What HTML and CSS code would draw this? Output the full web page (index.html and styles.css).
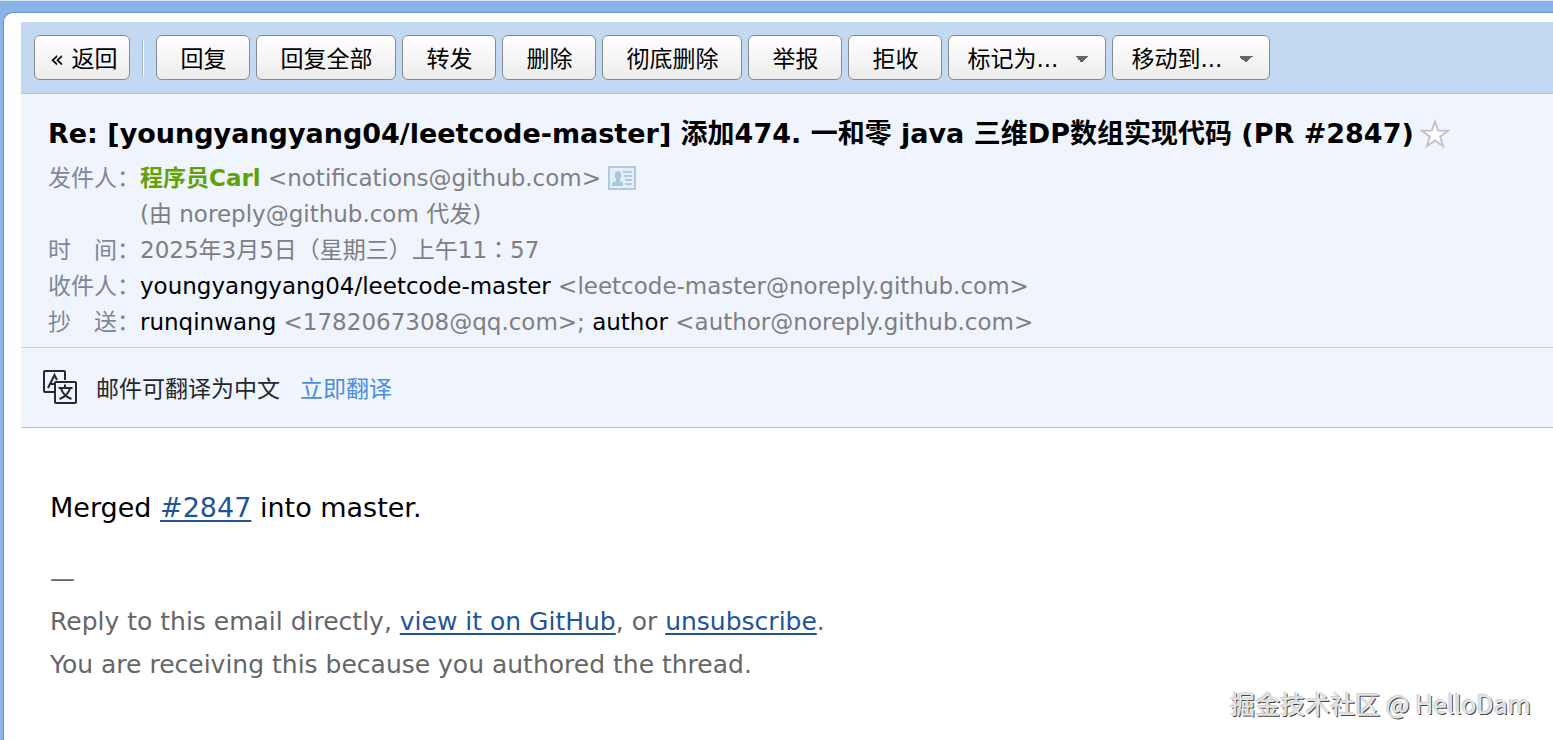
FILE: index.html
```html
<!DOCTYPE html>
<html lang="zh-CN">
<head>
<meta charset="utf-8">
<meta name="viewport" content="width=device-width, initial-scale=1">
<title>Re: [youngyangyang04/leetcode-master]</title>
<link rel="stylesheet" href="styles.css">
</head>
<body>
<main class="panel">
  <nav class="toolbar">
    <button class="btn btn-back" type="button">« 返回</button>
    <span class="divider"></span>
    <button class="btn" type="button">回复</button>
    <button class="btn" type="button">回复全部</button>
    <button class="btn" type="button">转发</button>
    <button class="btn" type="button">删除</button>
    <button class="btn" type="button">彻底删除</button>
    <button class="btn" type="button">举报</button>
    <button class="btn" type="button">拒收</button>
    <select class="btn btn-menu" aria-label="标记为"><option>标记为...</option></select>
    <select class="btn btn-menu" aria-label="移动到"><option>移动到...</option></select>
  </nav>

  <header class="mail-head">
    <h1 class="subject">
      <span>Re: [youngyangyang04/leetcode-master] 添加474. 一和零 java 三维DP数组实现代码 (PR #2847)</span>
      <svg class="star" viewBox="0 0 30 30" aria-hidden="true"><path d="M15 2.500 18.200 11.500 28 11.700 20.200 17.600 23 27 15 21.500 7 27 9.800 17.600 2 11.700 11.800 11.500Z" fill="#fff" stroke="#c3c4c6" stroke-width="2"/></svg>
    </h1>
    <dl class="meta">
      <dt>发件人：</dt>
      <dd><b class="sender">程序员Carl</b> &lt;notifications@github.com&gt;
        <svg class="card" viewBox="0 0 28 24" aria-hidden="true"><rect x="1" y="1" width="26" height="22" fill="#e3eff9" stroke="#b3cadc" stroke-width="2"/><path d="M4 20v-3l4-2v-2c-2-2-2-8 2-8s4 6 2 8v2l3 2v3Z" fill="#a9c8e0"/><path d="M15 6h9M16 10h8M17 14h7M17 18h7" stroke="#b3cadc" stroke-width="2"/></svg>
        <br>(由 noreply@github.com 代发)</dd>
      <dt>时　间：</dt>
      <dd>2025年3月5日（星期三）上午<time class="clock" lang="zh-TW">11：57</time></dd>
      <dt>收件人：</dt>
      <dd><span class="name">youngyangyang04/leetcode-master</span> &lt;leetcode-master@noreply.github.com&gt;</dd>
      <dt>抄　送：</dt>
      <dd><span class="name">runqinwang</span> &lt;1782067308@qq.com&gt;; <span class="name">author</span> &lt;author@noreply.github.com&gt;</dd>
    </dl>
  </header>

  <section class="translate">
    <svg class="translate-icon" viewBox="0 0 34 34" aria-hidden="true" fill="none" stroke="#25282d" stroke-width="2"><path d="M11 22H2Q1 22 1 21V2Q1 1 2 1H21Q22 1 22 2V10M5 18 11.500 5 14 10M8 14h4"/><rect x="12" y="12" width="21" height="21" rx="1"/><path d="M22 14.500v3M15.500 18h14M18 18.500c1.500 5 5 8.500 10.500 10.500M27 18.500c-1.500 5-5 8.500-10.500 10.500"/></svg>
    <span>邮件可翻译为中文</span>
    <a class="translate-link" href="#">立即翻译</a>
  </section>

  <article class="mail-body">
    <p class="lead">Merged <a href="#">#2847</a> into master.</p>
    <footer class="note">
      <p>—</p>
      <p>Reply to this email directly, <a href="#">view it on GitHub</a>, or <a href="#">unsubscribe</a>.</p>
      <p>You are receiving this because you authored the thread.</p>
    </footer>
  </article>
</main>
<div class="watermark">掘金技术社区 @ HelloDam</div>
</body>
</html>
```
FILE: styles.css
```css
* {
  box-sizing: border-box;
}

body {
  margin: 0;
  min-height: 100vh;
  display: flex;
  padding: 11px 0 0 3px;
  background: #8ab3e6;
  border-top: 1px solid #d5e6f7;
  font-family: "DejaVu Sans", "Noto Sans CJK SC", sans-serif;
  font-size: 23px;
  color: #000;
}

h1, p, dl, dd {
  margin: 0;
}

.panel {
  flex: 1;
  min-width: 0;
  padding: 9px 0 0 17px;
  background: #fff;
  border-top: 1px solid #6598cf;
  border-left: 1px solid #6598cf;
  border-top-left-radius: 10px;
}

.toolbar {
  display: flex;
  align-items: center;
  gap: 6px;
  height: 72px;
  padding: 0 13px;
  background: #c3d9f2;
  border-bottom: 1px solid #a5c1de;
}

.btn {
  height: 45px;
  padding: 4px 23px 0;
  border: 1px solid #868b92;
  border-radius: 6px;
  background: linear-gradient(#fff, #ececec);
  font: inherit;
  line-height: 39px;
  color: #000;
  white-space: nowrap;
}

.btn-back {
  padding: 4px 12px 0 15px;
}

.divider {
  width: 2px;
  height: 36px;
  margin: 0 6px;
  border-left: 1px solid #9fb5cd;
  background: #fff;
}

.btn-menu {
  width: 158px;
  padding: 4px 18px 0;
  appearance: none;
  background:
    linear-gradient(to bottom left, #666 50%, transparent 50%) right 23px top 20px / 7px 7px no-repeat,
    linear-gradient(to bottom right, #666 50%, transparent 50%) right 16px top 20px / 7px 7px no-repeat,
    linear-gradient(#fff, #ececec);
}

.mail-head {
  padding: 20px 27px 7px;
  background: #eff4fd;
  border-bottom: 1px solid #c3d3e3;
}

.subject {
  display: flex;
  align-items: center;
  gap: 6px;
  height: 40px;
  margin-bottom: 6px;
  font-size: 27px;
  line-height: 40px;
  white-space: nowrap;
}

.star {
  width: 30px;
  height: 30px;
}

.meta {
  display: grid;
  grid-template-columns: 92px 1fr;
  line-height: 36px;
  color: #7d7f82;
}

.meta dt {
  color: #7e8699;
  white-space: nowrap;
}

.sender {
  color: #5fa207;
}

.card {
  width: 28px;
  height: 24px;
  vertical-align: -4px;
}

.clock {
  font-family: "DejaVu Sans", "Noto Sans CJK TC", sans-serif;
}

.name {
  color: #000;
}

.translate {
  display: flex;
  align-items: center;
  height: 80px;
  padding: 0 22px 2px;
  background: #eff4fd;
  border-bottom: 1px solid #a9c2dc;
  color: #25282d;
}

.translate-icon {
  width: 34px;
  height: 34px;
  margin-right: 19px;
}

.translate-link {
  margin-left: 20px;
  color: #4b8de0;
  text-decoration: none;
}

.mail-body {
  padding: 58px 29px;
}

.mail-body a {
  color: #1f5597;
  text-underline-offset: 3px;
}

.lead {
  font-size: 27px;
  line-height: 43px;
}

.note {
  margin-top: 28px;
  font-size: 25px;
  line-height: 43px;
  color: #666;
}

.watermark {
  position: absolute;
  right: 22px;
  bottom: 18px;
  font-family: "Noto Sans CJK SC", sans-serif;
  font-size: 25px;
  line-height: 38px;
  color: #e4e4e4;
  text-shadow: -1px -1px 1px #ccc, 1px 1px 0 #444;
}
```
